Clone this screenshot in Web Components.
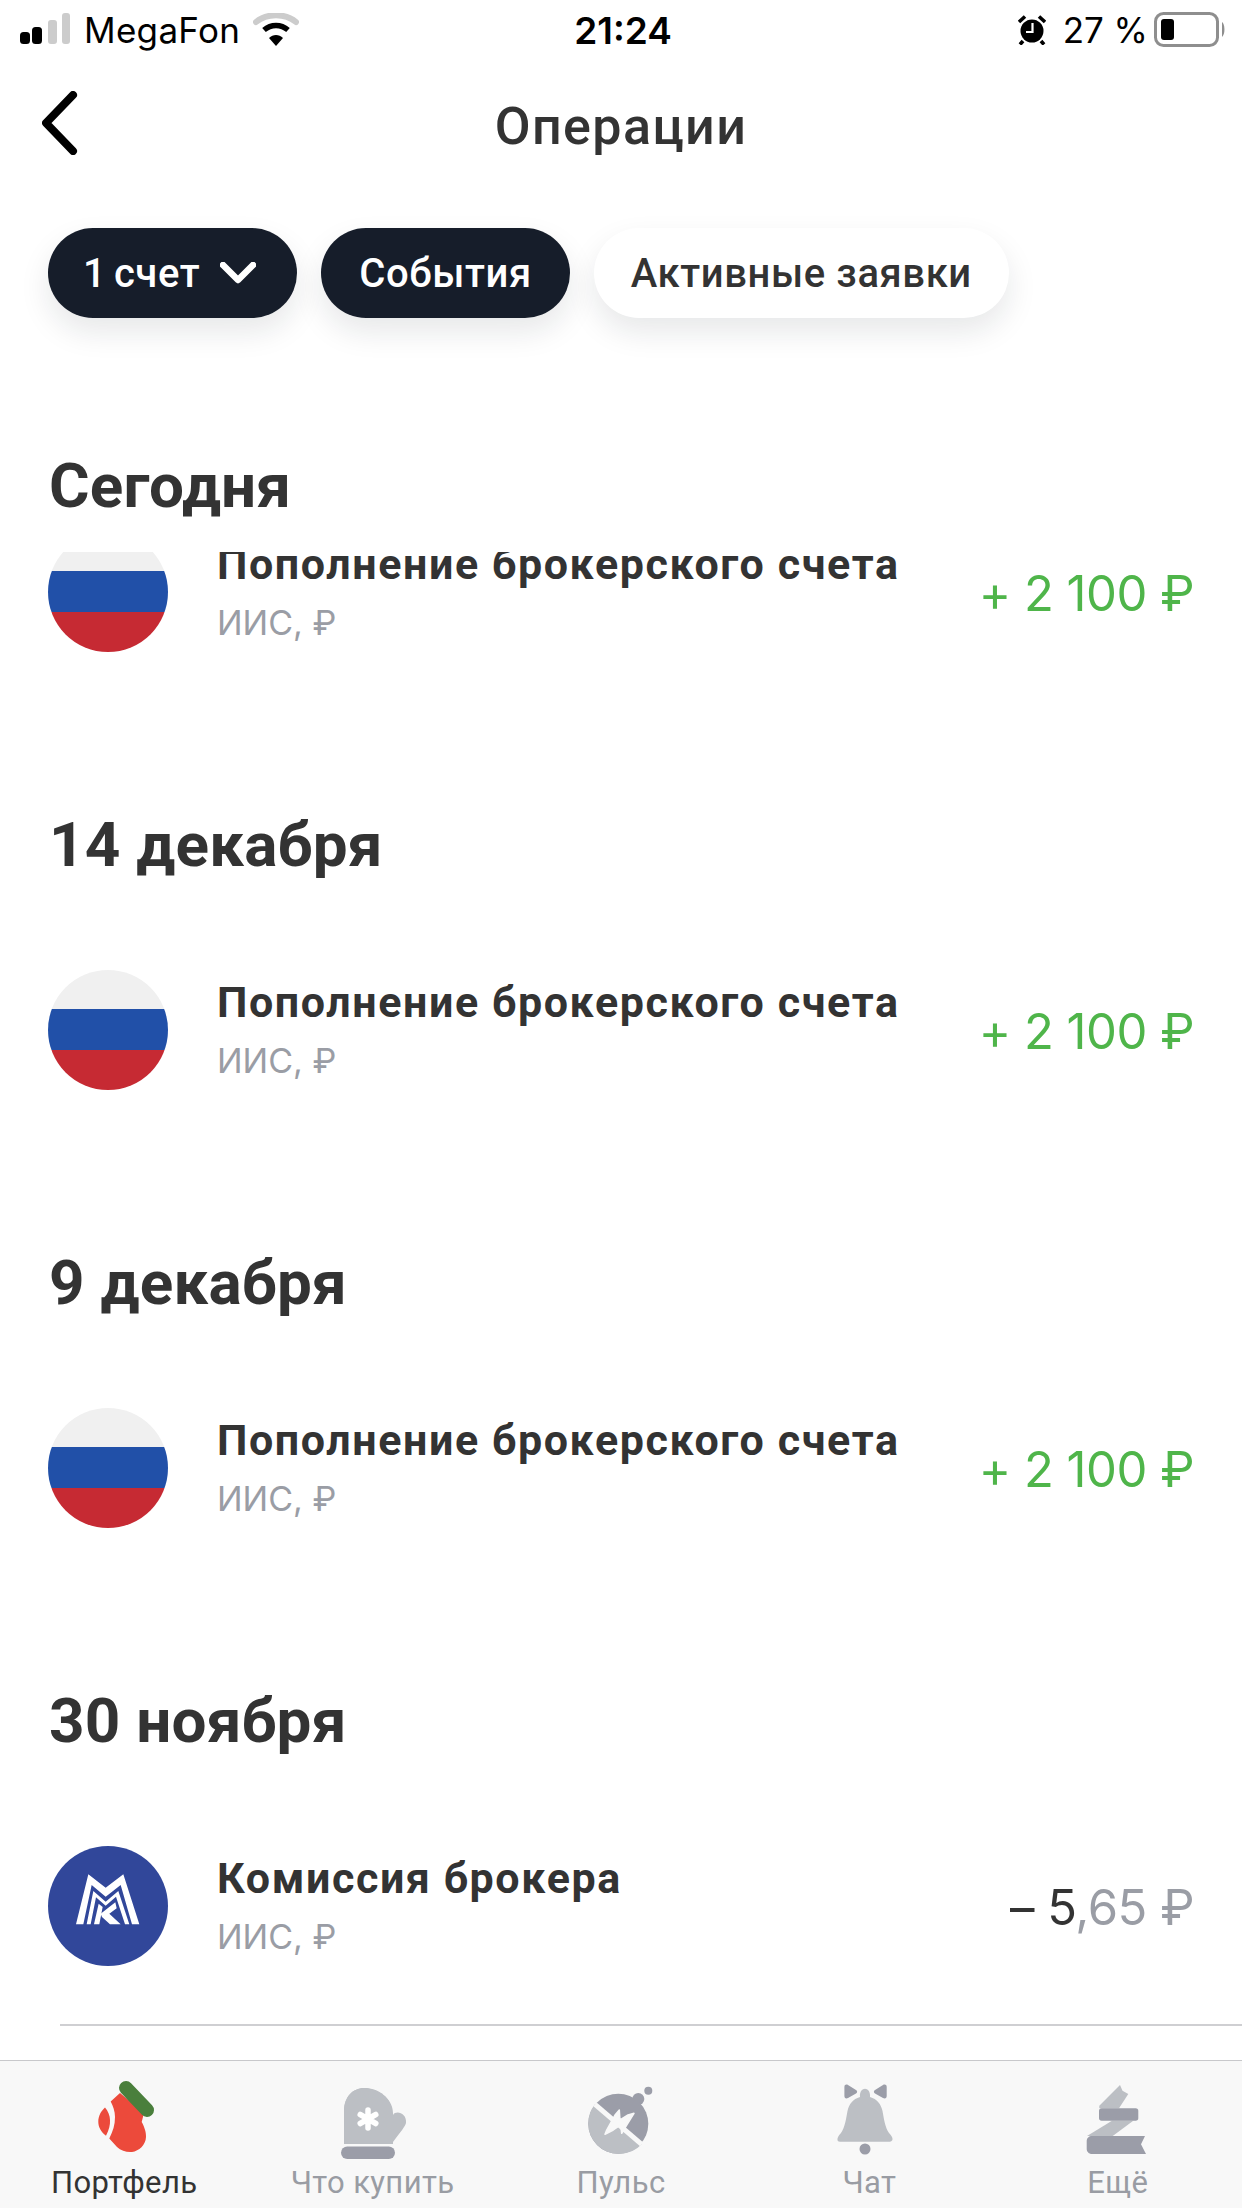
<!DOCTYPE html>
<html lang="ru">
<head>
<meta charset="utf-8">
<title>Операции</title>
<style>
    html, body { margin: 0; padding: 0; background: #fff; }
    body { width: 1242px; height: 2208px; overflow: hidden; font-family: Roboto, "Liberation Sans", sans-serif; color: #333; }
</style>
</head>
<body>
<x-app>
    <x-status-bar slot="status"></x-status-bar>
    <x-nav-bar slot="nav" heading="Операции"></x-nav-bar>
    <x-filters slot="filters">
        <x-pill dark caret>1 счет</x-pill>
        <x-pill dark>События</x-pill>
        <x-pill>Активные заявки</x-pill>
    </x-filters>
    <x-day heading="Сегодня" clipped>
        <x-op-row avatar="ru" name="Пополнение брокерского счета" sub="ИИС, ₽" whole="+ 2 100 ₽" income></x-op-row>
    </x-day>
    <x-day heading="14 декабря">
        <x-op-row avatar="ru" name="Пополнение брокерского счета" sub="ИИС, ₽" whole="+ 2 100 ₽" income></x-op-row>
    </x-day>
    <x-day heading="9 декабря">
        <x-op-row avatar="ru" name="Пополнение брокерского счета" sub="ИИС, ₽" whole="+ 2 100 ₽" income></x-op-row>
    </x-day>
    <x-day heading="30 ноября" last>
        <x-op-row avatar="mmk" name="Комиссия брокера" sub="ИИС, ₽" whole="– 5" frac=",65 ₽" divider></x-op-row>
    </x-day>
    <x-tab-bar slot="tabs"></x-tab-bar>
</x-app>

<script>
class App extends HTMLElement {
    constructor() {
        super();
        this.shadow = this.attachShadow({ mode: 'open' });
    }

    connectedCallback() {
        this.shadow.innerHTML = /*html*/`
        <style>
            :host { display: flex; flex-direction: column; width: 1242px; height: 2208px; background: #fff; }
            .list { flex: 1; min-height: 0; overflow: hidden; padding-top: 128px; }
        </style>
        <slot name="status"></slot>
        <slot name="nav"></slot>
        <slot name="filters"></slot>
        <div class="list"><slot></slot></div>
        <slot name="tabs"></slot>
        `;
    }
}

class StatusBar extends HTMLElement {
    constructor() {
        super();
        this.shadow = this.attachShadow({ mode: 'open' });
    }

    connectedCallback() {
        this.shadow.innerHTML = /*html*/`
        <style>
            :host {
                display: grid;
                grid-template-columns: 1fr auto 1fr;
                align-items: center;
                height: 60px;
                padding: 0 16px 0 20px;
                font: 400 35px Inter, "Liberation Sans", sans-serif;
                color: #000;
            }
            .side { display: flex; align-items: center; }
            .side.right { justify-content: flex-end; }
            .time { font-weight: 600; font-size: 37px; }
            .carrier { margin: 0 13px 0 14px; letter-spacing: .3px; }
            .pct { margin: 0 6px 0 17px; }
            svg { display: block; }
        </style>
        <div class="side">
            <svg width="50" height="34" viewBox="0 0 50 34">
                <rect x="0" y="19" width="10" height="12" rx="3.5" fill="#000"/>
                <rect x="12" y="14" width="10" height="17" rx="3.5" fill="#000"/>
                <rect x="28" y="7" width="9" height="24" rx="3" fill="#ccc"/>
                <rect x="42" y="0" width="8" height="31" rx="3" fill="#ccc"/>
            </svg>
            <span class="carrier">MegaFon</span>
            <svg width="46" height="34" viewBox="0 0 46 34">
                <path d="M3 9 C14 0 32 0 43 9" fill="none" stroke="#ccc" stroke-width="6" stroke-linecap="round"/>
                <path d="M11 17 C18 11 28 11 35 17" fill="none" stroke="#000" stroke-width="5.5" stroke-linecap="butt"/>
                <path d="M16 25 L23 33 L30 25 C26 21 20 21 16 25 Z" fill="#000"/>
            </svg>
        </div>
        <div class="time">21:24</div>
        <div class="side right">
            <svg width="28" height="30" viewBox="0 0 28 30">
                <circle cx="14" cy="16" r="11.5" fill="#000"/>
                <path d="M14.5 8 V17 H8" fill="none" stroke="#fff" stroke-width="2.2"/>
                <path d="M1 7 L7 1.5 M27 7 L21 1.5 M5 26 L2 29.5 M23 26 L26 29.5" stroke="#000" stroke-width="3.6"/>
            </svg>
            <span class="pct">27 %</span>
            <svg width="72" height="36" viewBox="0 0 72 36">
                <rect x="1.5" y="1.5" width="62" height="32" rx="8" fill="none" stroke="#8e8e8e" stroke-width="3"/>
                <rect x="7" y="7" width="13" height="21" rx="3" fill="#000"/>
                <path d="M68 10 C71 12 71.500 22 68 25 Z" fill="#8e8e8e"/>
            </svg>
        </div>
        `;
    }
}

class NavBar extends HTMLElement {
    constructor() {
        super();
        this.shadow = this.attachShadow({ mode: 'open' });
    }

    connectedCallback() {
        this.shadow.innerHTML = /*html*/`
        <style>
            :host {
                display: grid;
                grid-template-columns: 1fr auto 1fr;
                align-items: center;
                height: 133px;
            }
            h1 { margin: 0; font: 500 52px Roboto, sans-serif; color: #333; letter-spacing: 1.4px; }
            svg { display: block; margin: -7px 0 0 42px; }
        </style>
        <svg width="36" height="64" viewBox="0 0 36 64">
            <path d="M31 4 L4 32 L31 60" fill="none" stroke="#000" stroke-width="8" stroke-linecap="round" stroke-linejoin="round"/>
        </svg>
        <h1>${this.getAttribute('heading')}</h1>
        `;
    }
}

class Filters extends HTMLElement {
    constructor() {
        super();
        this.shadow = this.attachShadow({ mode: 'open' });
    }

    connectedCallback() {
        this.shadow.innerHTML = /*html*/`
        <style>
            :host { display: flex; gap: 24px; padding: 35px 0 0 48px; }
        </style>
        <slot></slot>
        `;
    }
}

class Pill extends HTMLElement {
    constructor() {
        super();
        this.shadow = this.attachShadow({ mode: 'open' });
    }

    connectedCallback() {
        const caret = this.hasAttribute('caret')
            ? `<svg width="36" height="22" viewBox="0 0 36 22"><path d="M3 3 L18 18 L33 3" fill="none" stroke="#fff" stroke-width="6.5" stroke-linecap="round" stroke-linejoin="round"/></svg>`
            : '';
        this.shadow.innerHTML = /*html*/`
        <style>
            :host {
                display: inline-flex;
                align-items: center;
                gap: 20px;
                height: 90px;
                padding: 0 37px;
                border-radius: 45px;
                background: #fff;
                color: #333;
                font: 500 40px Roboto, sans-serif;
                letter-spacing: .6px;
                box-shadow: 0 14px 30px rgba(20, 25, 40, .1);
            }
            :host([dark]) { background: #161d2a; color: #fff; padding: 0 38px; }
            :host([caret]) { padding: 0 41px 0 35px; word-spacing: -3px; }
        </style>
        <slot></slot>${caret}
        `;
    }
}

class Day extends HTMLElement {
    constructor() {
        super();
        this.shadow = this.attachShadow({ mode: 'open' });
    }

    connectedCallback() {
        this.shadow.innerHTML = /*html*/`
        <style>
            :host { display: block; height: 438px; }
            :host([clipped]) { height: 359px; }
            :host([last]) { height: auto; }
            h2 { margin: 0; padding-left: 49px; height: 80px; font: 700 62px/80px Roboto, sans-serif; color: #333; letter-spacing: .2px; }
            .body { padding-top: 85px; }
            :host([clipped]) .body { margin-top: 26px; padding-top: 0; height: 140px; overflow: hidden; }
            :host([clipped]) .inner { margin-top: -20px; }
        </style>
        <h2>${this.getAttribute('heading')}</h2>
        <div class="body"><div class="inner"><slot></slot></div></div>
        `;
    }
}

class OpRow extends HTMLElement {
    constructor() {
        super();
        this.shadow = this.attachShadow({ mode: 'open' });
    }

    connectedCallback() {
        const frac = this.getAttribute('frac');
        const rule = this.hasAttribute('divider') ? '<div class="rule"></div>' : '';
        this.shadow.innerHTML = /*html*/`
        <style>
            :host { display: block; }
            .row { display: flex; align-items: center; padding: 0 48px; gap: 49px; height: 120px; }
            .text { flex: 1; display: flex; flex-direction: column; min-width: 0; padding-top: 6px; }
            .name { font: 700 43px/55px Roboto, sans-serif; letter-spacing: 1.6px; color: #333; white-space: nowrap; }
            .sub { font: 400 34px/61px Inter, sans-serif; color: #9a9da5; }
            .amount { font: 400 49px/56px Inter, sans-serif; color: #333; white-space: nowrap; padding-top: 4px; letter-spacing: -.5px; }
            .amount .frac { color: #9a9da5; }
            :host([income]) .amount { color: #4fb54a; }
            .rule { height: 2px; background: #cfcfd2; margin: 58px 0 0 60px; }
        </style>
        <div class="row">
            <x-avatar kind="${this.getAttribute('avatar')}"></x-avatar>
            <div class="text">
                <span class="name">${this.getAttribute('name')}</span>
                <span class="sub">${this.getAttribute('sub')}</span>
            </div>
            <div class="amount">${this.getAttribute('whole')}${frac ? `<span class="frac">${frac}</span>` : ''}</div>
        </div>
        ${rule}
        `;
    }
}

class Avatar extends HTMLElement {
    constructor() {
        super();
        this.shadow = this.attachShadow({ mode: 'open' });
    }

    connectedCallback() {
        const flag = `
            <rect width="120" height="39" fill="#f0f0f0"/>
            <rect y="39" width="120" height="41" fill="#2150a8"/>
            <rect y="80" width="120" height="40" fill="#c62a33"/>`;
        const mmk = `
            <rect width="120" height="120" fill="#31479a"/>
            <g transform="translate(22 19) scale(.3333)" fill="#fff">
                <path d="M18 178 L55 28 L107 68 L160 28 L208 178 H186 L152 60 L107 95 L65 60 L40 178 Z"/>
                <path d="M50 178 L70 78 L107 110 L145 78 L178 178 H165 L138 95 L107 122 L78 97 L62 178 Z"/>
                <path d="M72 178 L86 116 L98 126 L88 178 Z"/>
                <path d="M92 146 L136 112 L140 130 L118 146 L152 178 H120 L96 156 Z"/>
            </g>`;
        this.shadow.innerHTML = /*html*/`
        <style>
            :host { display: block; width: 120px; height: 120px; flex: none; border-radius: 50%; overflow: hidden; }
            svg { display: block; }
        </style>
        <svg width="120" height="120" viewBox="0 0 120 120">${this.getAttribute('kind') === 'mmk' ? mmk : flag}</svg>
        `;
    }
}

const LIGHT = '#bcbfc4';
const DARK = '#9b9da8';

const TAB_ICONS = [
    // чулок
    `<svg width="100" height="90" viewBox="-6 0 100 90">
        <path d="M40 18 L30.700 26.500 C33 31 35 36 35 42 C35 50 33 56 29.300 63.500 L37 72 C41 76 47 77.500 52 77 C59 76 65.700 70 66 62 C66.300 57 64 51 61.700 47 L64 38 Z" fill="#ec4a3b"/>
        <path d="M25 32.500 C21 36 18.300 41 18.300 47 C18.300 52 21 57 26 60.700 C29 55 30.300 50 30 45 C30 41 28 36 25 32.500 Z" fill="#ec4a3b"/>
        <path d="M46 13 L67 35" fill="none" stroke="#4a7f3c" stroke-width="14" stroke-linecap="round"/>
    </svg>`,
    // варежка
    `<svg width="100" height="90" viewBox="0 0 100 90">
        <path d="M21 59 V36 C21 22 30 13 41 13 C52 13 70 22 70 38 L70 40 C73 35 84 38 83 48 C82 52 78 56 70 67 V69 H21 Z" fill="${LIGHT}"/>
        <path d="M21 59 V36 C21 22 30 13 41 13 C56 13 69 23 69 38 V69 H21 Z" fill="${LIGHT}"/>
        <rect x="18" y="71.500" width="54" height="12.500" rx="6.250" fill="${DARK}"/>
        <g stroke="#fff" stroke-width="5.500" stroke-linecap="round">
            <path d="M45 35 V53 M37.200 39.500 L52.800 48.500 M37.200 48.500 L52.800 39.500"/>
        </g>
    </svg>`,
    // пульс
    `<svg width="100" height="90" viewBox="1 0 100 90">
        <circle cx="78.300" cy="15.700" r="4" fill="${DARK}"/>
        <circle cx="68.300" cy="24" r="6" fill="${DARK}"/>
        <circle cx="48.300" cy="48.700" r="30" fill="${DARK}"/>
        <path d="M25 29.300 L71.700 69.300 A30 30 0 0 1 48.300 78.700 A30 30 0 0 1 18.300 48.700 A30 30 0 0 1 25 29.300 Z" fill="${LIGHT}"/>
        <path d="M25 29.300 L71.700 69.300" stroke="#f8f8f8" stroke-width="5"/>
        <path d="M64 38.300 L58 40 L50 45 L49.300 35 L45 40 L36.700 55 L35 59.300 L43.300 55 L50.700 50 L51.700 58.300 L56.700 50 Z" fill="#f8f8f8" stroke="#f8f8f8" stroke-width="1.500" stroke-linejoin="round"/>
    </svg>`,
    // колокольчик
    `<svg width="100" height="90" viewBox="0 0 100 90">
        <path d="M41 22 C40 11 52 11 51 22 C58 24 62 29 63.500 36 C65 44 66 52 70 58 C74 62 75 66 71 66.700 H21 C17 66.700 18 62 22 58 C26 52 27 44 28.500 36 C30 29 34 24 41 22 Z" fill="${LIGHT}"/>
        <circle cx="46" cy="74" r="5.500" fill="${DARK}"/>
        <path d="M25.400 12 C25.400 9.500 27.500 9 29 10 L37 15 C38.500 16 38.500 17.500 37 18.500 L29 23 C27.500 24 25.400 23.500 25.400 21 Z" fill="${DARK}"/>
        <path d="M67.700 12 C67.700 9.500 65.500 9 64 10 L56 15 C54.500 16 54.500 17.500 56 18.500 L64 23 C65.500 24 67.700 23.500 67.700 21 Z" fill="${DARK}"/>
    </svg>`,
    // лента
    `<svg width="100" height="90" viewBox="-2 0 100 90">
        <path d="M50 10 L52.500 15.700 L58.300 19 L49 33.300 L29.300 33.300 V30.700 Z" fill="${LIGHT}"/>
        <path d="M42 45.700 L63.300 45.700 L42.700 61 L17 61 Z" fill="${LIGHT}"/>
        <rect x="29" y="33.300" width="39.300" height="12.400" rx="2.700" fill="${DARK}"/>
        <path d="M22 61 H75 L71 69.300 L76 79 H22 C19 79 16.700 76.700 16.700 74 V66 C16.700 63 19 61 22 61 Z" fill="${DARK}"/>
    </svg>`
];

class TabBar extends HTMLElement {
    constructor() {
        super();
        this.shadow = this.attachShadow({ mode: 'open' });
    }

    connectedCallback() {
        const labels = ['Портфель', 'Что купить', 'Пульс', 'Чат', 'Ещё'];
        const tabs = labels.map((label, i) => `
            <div class="tab${i === 0 ? ' active' : ''}">
                ${TAB_ICONS[i]}
                <span>${label}</span>
            </div>`).join('');
        this.shadow.innerHTML = /*html*/`
        <style>
            :host {
                display: grid;
                grid-template-columns: repeat(5, 1fr);
                height: 148px;
                box-sizing: border-box;
                padding-top: 14px;
                background: #f8f8f8;
                border-top: 1px solid #c8c8cb;
            }
            .tab { display: flex; flex-direction: column; align-items: center; color: #999ca3; font: 400 31px/36px Roboto, sans-serif; letter-spacing: .4px; }
            .tab.active { color: #333; }
            svg { display: block; }
        </style>
        ${tabs}
        `;
    }
}

customElements.define('x-app', App);
customElements.define('x-status-bar', StatusBar);
customElements.define('x-nav-bar', NavBar);
customElements.define('x-filters', Filters);
customElements.define('x-pill', Pill);
customElements.define('x-day', Day);
customElements.define('x-op-row', OpRow);
customElements.define('x-avatar', Avatar);
customElements.define('x-tab-bar', TabBar);
</script>
</body>
</html>
